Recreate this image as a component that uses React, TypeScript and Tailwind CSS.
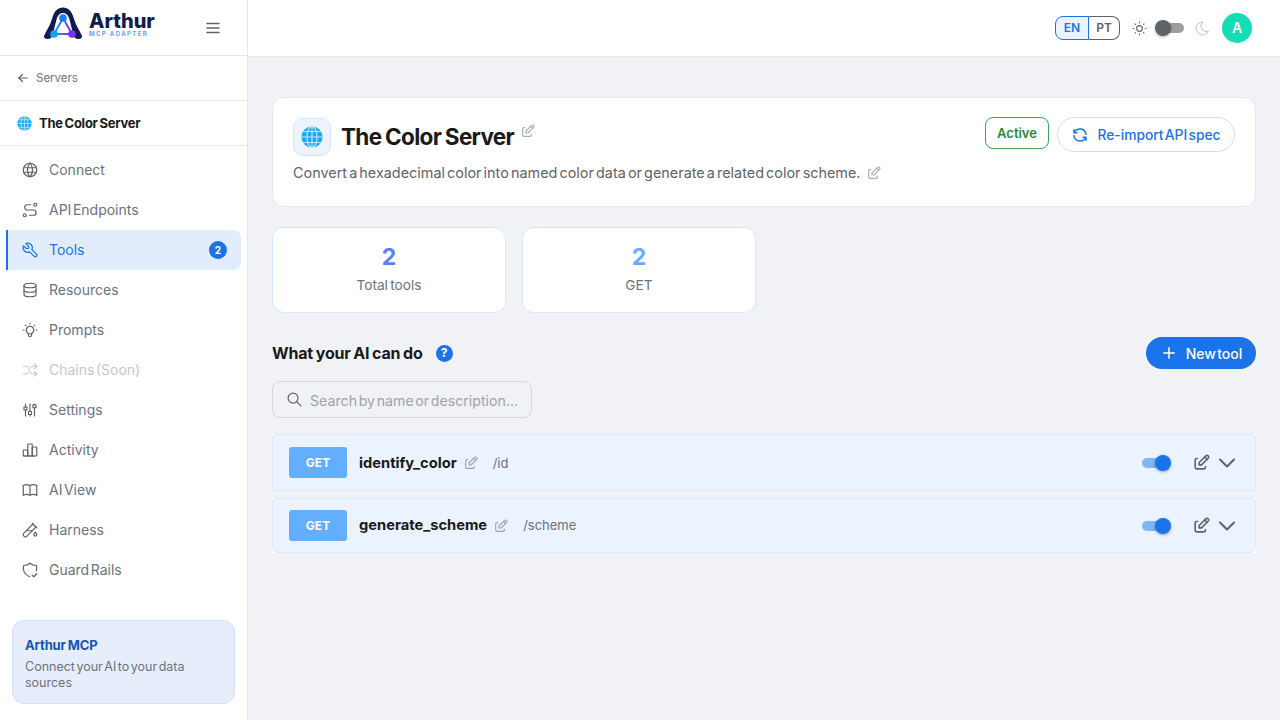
import {
  TbAdjustmentsAlt,
  TbArrowLeft,
  TbArrowsShuffle,
  TbBook,
  TbBulb,
  TbChartBar,
  TbChevronDown,
  TbDatabase,
  TbEdit,
  TbMenu2,
  TbMoon,
  TbPlus,
  TbRefresh,
  TbRoute,
  TbSearch,
  TbShieldCheck,
  TbSun,
  TbTestPipe,
  TbTool,
  TbWorld,
} from "react-icons/tb";
import type { IconType } from "react-icons";

const navItems: { label: string; icon: IconType; active?: boolean; disabled?: boolean; badge?: number }[] = [
  { label: "Connect", icon: TbWorld },
  { label: "API Endpoints", icon: TbRoute },
  { label: "Tools", icon: TbTool, active: true, badge: 2 },
  { label: "Resources", icon: TbDatabase },
  { label: "Prompts", icon: TbBulb },
  { label: "Chains (Soon)", icon: TbArrowsShuffle, disabled: true },
  { label: "Settings", icon: TbAdjustmentsAlt },
  { label: "Activity", icon: TbChartBar },
  { label: "AI View", icon: TbBook },
  { label: "Harness", icon: TbTestPipe },
  { label: "Guard Rails", icon: TbShieldCheck },
];

function Logo() {
  return (
    <svg width="40" height="34" viewBox="0 0 40 34" fill="none">
      <defs>
        <linearGradient id="tri" x1="10" y1="27" x2="30" y2="27" gradientUnits="userSpaceOnUse">
          <stop stopColor="#0ea5f5" />
          <stop offset="1" stopColor="#7c2cf5" />
        </linearGradient>
      </defs>
      <path
        d="M1 29 C3 24 7 19 9 12 C11 4 15 0.500 20 0.500 C25 0.500 29 4 31 12 C33 19 37 24 39 29 C39.500 32 35 33 32 31 C30 29 28 17 26 11 C25 8 23 6 20 6 C17 6 15 8 14 11 C12 17 10 29 8 31 C5 33 0.500 32 1 29 Z"
        fill="#0f1c4d"
      />
      <path d="M20 11 L11 27 H29 Z" stroke="url(#tri)" strokeWidth="2" fill="#fff" />
      <circle cx="20" cy="11" r="3.800" fill="#1d7cf2" />
      <circle cx="11" cy="27" r="3.800" fill="#0ea5f5" />
      <circle cx="29" cy="27" r="3.800" fill="#7c2cf5" />
    </svg>
  );
}

function GlobeEmoji({ size }: { size: number }) {
  return (
    <svg width={size} height={size} viewBox="0 0 24 24" fill="none">
      <circle cx="12" cy="12" r="11.500" fill="#1ea7f3" />
      <g stroke="#bfe8fd" strokeWidth="1.300">
        <ellipse cx="12" cy="12" rx="5.500" ry="11.500" />
        <path d="M12 0.500V23.500M0.500 12H23.500M2.300 6H21.700M2.300 18H21.700" />
      </g>
    </svg>
  );
}

function ToolRow({ name, path, last }: { name: string; path: string; last?: boolean }) {
  return (
    <div className="bg-white">
      <div
        className={`flex items-center border border-[#dbeafe] bg-[#eaf3fe] pr-[14px] pl-4 ${
          last ? "h-[55px] rounded-t-[4px] rounded-b-md" : "h-[57px] rounded-t-[4px]"
        }`}
      >
        <span className="flex h-[31px] w-[58px] items-center justify-center rounded-[3px] bg-[#64aeff] text-xs font-bold text-white">
          GET
        </span>
        <span className={`ml-3 text-[14.700px] font-bold text-[#1a1a1a] ${last ? "" : "pt-px"}`}>{name}</span>
        <TbEdit className="ml-[6px] text-[#9ca3af]" size={16} strokeWidth={1.7} />
        <span className={`ml-[14px] text-[13px] text-[#6b7280] ${last ? "" : "pt-[2px]"}`}>{path}</span>
        <div className="relative ml-auto h-[10px] w-[28px] rounded-full bg-[#7fb5f6]">
          <span className="absolute -top-[3px] right-[-1px] h-4 w-4 rounded-full bg-[#1a73e8] shadow-[0_1px_3px_rgba(0,0,0,0.35)]" />
        </div>
        <TbEdit className="ml-[22px] text-[#5f6368]" size={19} />
        <TbChevronDown className="ml-[2px] text-[#5f6368]" size={28} strokeWidth={1.8} />
      </div>
    </div>
  );
}

export default function App() {
  return (
    <div
      className="flex h-[720px] w-[1280px] overflow-hidden bg-[#f0f2f5] text-[#1a1a1a] [word-spacing:-2.4px]"
      style={{ fontFamily: '"Inter", "Liberation Sans", sans-serif' }}
    >
      <aside className="flex w-[248px] shrink-0 flex-col border-r border-[#e5e7eb] bg-white">
        <div className="flex h-[56px] shrink-0 items-center border-b border-[#e5e7eb] pr-[25px] pl-[43px]">
          <div className="mb-[7px] flex items-center">
            <Logo />
            <div className="ml-[6px] flex flex-col">
              <span className="text-[20px] leading-[19px] font-extrabold text-[#0f1c4d]">Arthur</span>
              <span className="text-[6px] leading-[6px] font-bold tracking-[0.23em] text-[#6ea0f7] [word-spacing:0]">
                MCP ADAPTER
              </span>
            </div>
          </div>
          <TbMenu2 className="ml-auto text-[#5f6368]" size={18} />
        </div>
        <div className="flex h-[45px] shrink-0 items-center gap-[6px] border-b border-[#e5e7eb] pl-[16px]">
          <TbArrowLeft className="text-[#5f6368]" size={14} />
          <span className="pt-px text-[11.500px] text-[#6b7280]">Servers</span>
        </div>
        <div className="flex h-[45px] shrink-0 items-center gap-[7px] border-b border-[#e5e7eb] pl-[17px]">
          <GlobeEmoji size={15} />
          <span className="pt-px text-[13px] font-bold tracking-[-0.02em] [word-spacing:-1px]">The Color Server</span>
        </div>
        <nav className="mt-[4px] flex flex-col">
          {navItems.map((item) => {
            const Icon = item.icon;
            return (
              <div
                key={item.label}
                className={`mx-[6px] flex h-[40px] items-center rounded-r-lg pr-[14px] text-sm ${
                  item.active
                    ? "border-l-2 border-[#1a73e8] bg-[#e1edfc] pl-[13px] text-[#1a73e8]"
                    : item.disabled
                      ? "pl-[15px] text-[#c4c7cc]"
                      : "pl-[15px] text-[#6b7280]"
                }`}
              >
                <Icon
                  size={18}
                  strokeWidth={1.6}
                  className={item.active ? "text-[#1a73e8]" : item.disabled ? "text-[#c4c7cc]" : "text-[#5f6368]"}
                />
                <span className="ml-[10px]">{item.label}</span>
                {item.badge ? (
                  <span className="ml-auto flex h-[18px] w-[18px] items-center justify-center rounded-full bg-[#1a73e8] text-[10px] font-bold text-white">
                    {item.badge}
                  </span>
                ) : null}
              </div>
            );
          })}
        </nav>
        <div className="mx-[12px] mt-auto mb-[16px] rounded-xl border border-[#cfe0fb] bg-[#e6eefb] px-3 pt-[14px] pb-[12px]">
          <div className="text-[13px] leading-[20px] font-bold tracking-[-0.01em] text-[#1555b5] [word-spacing:-1px]">Arthur MCP</div>
          <div className="mt-[4px] text-[12.500px] leading-4 text-[#6b7280] [word-spacing:-2px]">Connect your AI to your data sources</div>
        </div>
      </aside>

      <div className="flex min-w-0 flex-1 flex-col">
        <header className="flex h-[57px] shrink-0 items-center border-b border-[#e5e7eb] bg-white pr-[28px]">
          <div className="ml-auto flex h-[24px] text-xs font-semibold">
            <span className="flex w-[34px] items-center justify-center rounded-l-lg border border-[#1a73e8] bg-[#eaf3fe] text-[#1a73e8]">
              EN
            </span>
            <span className="flex w-[31px] items-center justify-center rounded-r-lg border border-l-0 border-[#5f6368] text-[#5f6368]">
              PT
            </span>
          </div>
          <TbSun className="ml-[11px] text-[#5f6368]" size={17} strokeWidth={1.6} />
          <div className="relative ml-[9px] h-[10px] w-[27px] rounded-full bg-[#9e9e9e]">
            <span className="absolute -top-[3px] left-[-2px] h-4 w-4 rounded-full bg-[#5f6368] shadow-[0_1px_3px_rgba(0,0,0,0.3)]" />
          </div>
          <TbMoon className="ml-[10px] text-[#c8cacd]" size={17} strokeWidth={1.6} />
          <span className="ml-[11px] flex h-[30px] w-[30px] items-center justify-center rounded-full bg-[#14dcb4] text-sm font-semibold text-white">
            A
          </span>
        </header>

        <main className="flex flex-1 flex-col px-[24px] pt-[40px]">
          <section className="flex h-[110px] shrink-0 flex-col rounded-xl border border-[#e5e7eb] bg-white px-[20px] pt-[20px]">
            <div className="flex items-start">
              <span className="flex h-[38px] w-[38px] items-center justify-center rounded-[10px] border border-[#d5e3fb] bg-[#edf3fe]">
                <GlobeEmoji size={22} />
              </span>
              <h1 className="ml-[10px] text-[22.500px] leading-[38px] font-bold tracking-[-0.03em] [word-spacing:-1px]">The Color Server</h1>
              <TbEdit className="mt-[5px] ml-[6px] text-[#a8abb0]" size={16} strokeWidth={1.7} />
              <span className="-mt-[1px] ml-auto flex h-[32px] w-[64px] items-center justify-center rounded-lg border border-[#3ba55d] pt-px text-[13px] font-semibold text-[#1e8e3e]">
                Active
              </span>
              <span className="-mt-[1px] ml-[8px] flex h-[35px] w-[178px] items-center justify-center gap-[8px] rounded-full border border-[#dadce0] pt-px text-[13.800px] font-medium text-[#1a73e8]">
                <TbRefresh size={18} />
                Re-import API spec
              </span>
            </div>
            <div className="mt-[7px] flex items-center text-[14.400px] leading-[20px] text-[#5f6368] [word-spacing:-1.900px]">
              Convert a hexadecimal color into named color data or generate a related color scheme.
              <TbEdit className="ml-[5px] text-[#a8abb0]" size={16} strokeWidth={1.7} />
            </div>
          </section>

          <div className="mt-[20px] flex gap-[16px]">
            {[
              { value: 2, label: "Total tools", color: "text-[#5b82f5]" },
              { value: 2, label: "GET", color: "text-[#64aeff]" },
            ].map((stat) => (
              <div
                key={stat.label}
                className="flex h-[86px] w-[234px] flex-col items-center rounded-xl border border-[#d8e6fd] bg-white pt-[14px]"
              >
                <span className={`text-[23px] leading-[30px] font-bold ${stat.color}`}>{stat.value}</span>
                <span className="mt-[3px] text-[13.700px] leading-[20px] text-[#6b7280] [word-spacing:-1.500px]">{stat.label}</span>
              </div>
            ))}
          </div>

          <div className="mt-[24px] flex h-[32px] items-center">
            <h2 className="text-base font-bold tracking-[-0.01em] [word-spacing:-1px]">What your AI can do</h2>
            <span className="ml-[13px] flex h-[17px] w-[17px] items-center justify-center rounded-full bg-[#1a73e8] text-xs font-bold text-white">
              ?
            </span>
            <span className="ml-auto flex h-[32px] w-[110px] items-center justify-center gap-[8px] rounded-full bg-[#1a73e8] text-[14px] font-medium text-white">
              <TbPlus size={18} />
              New tool
            </span>
          </div>

          <div className="mt-[12px] flex h-[37px] w-[260px] items-center rounded-lg border border-[#d5d7da] pl-[13px]">
            <TbSearch className="text-[#5f6368]" size={17} strokeWidth={1.7} />
            <span className="ml-[7px] pt-[2px] text-[14.200px] text-[#a0a3a8]">Search by name or description...</span>
          </div>

          <div className="mt-[16px] flex flex-col gap-[7px]">
            <ToolRow name="identify_color" path="/id" />
            <ToolRow name="generate_scheme" path="/scheme" last />
          </div>
        </main>
      </div>
    </div>
  );
}
